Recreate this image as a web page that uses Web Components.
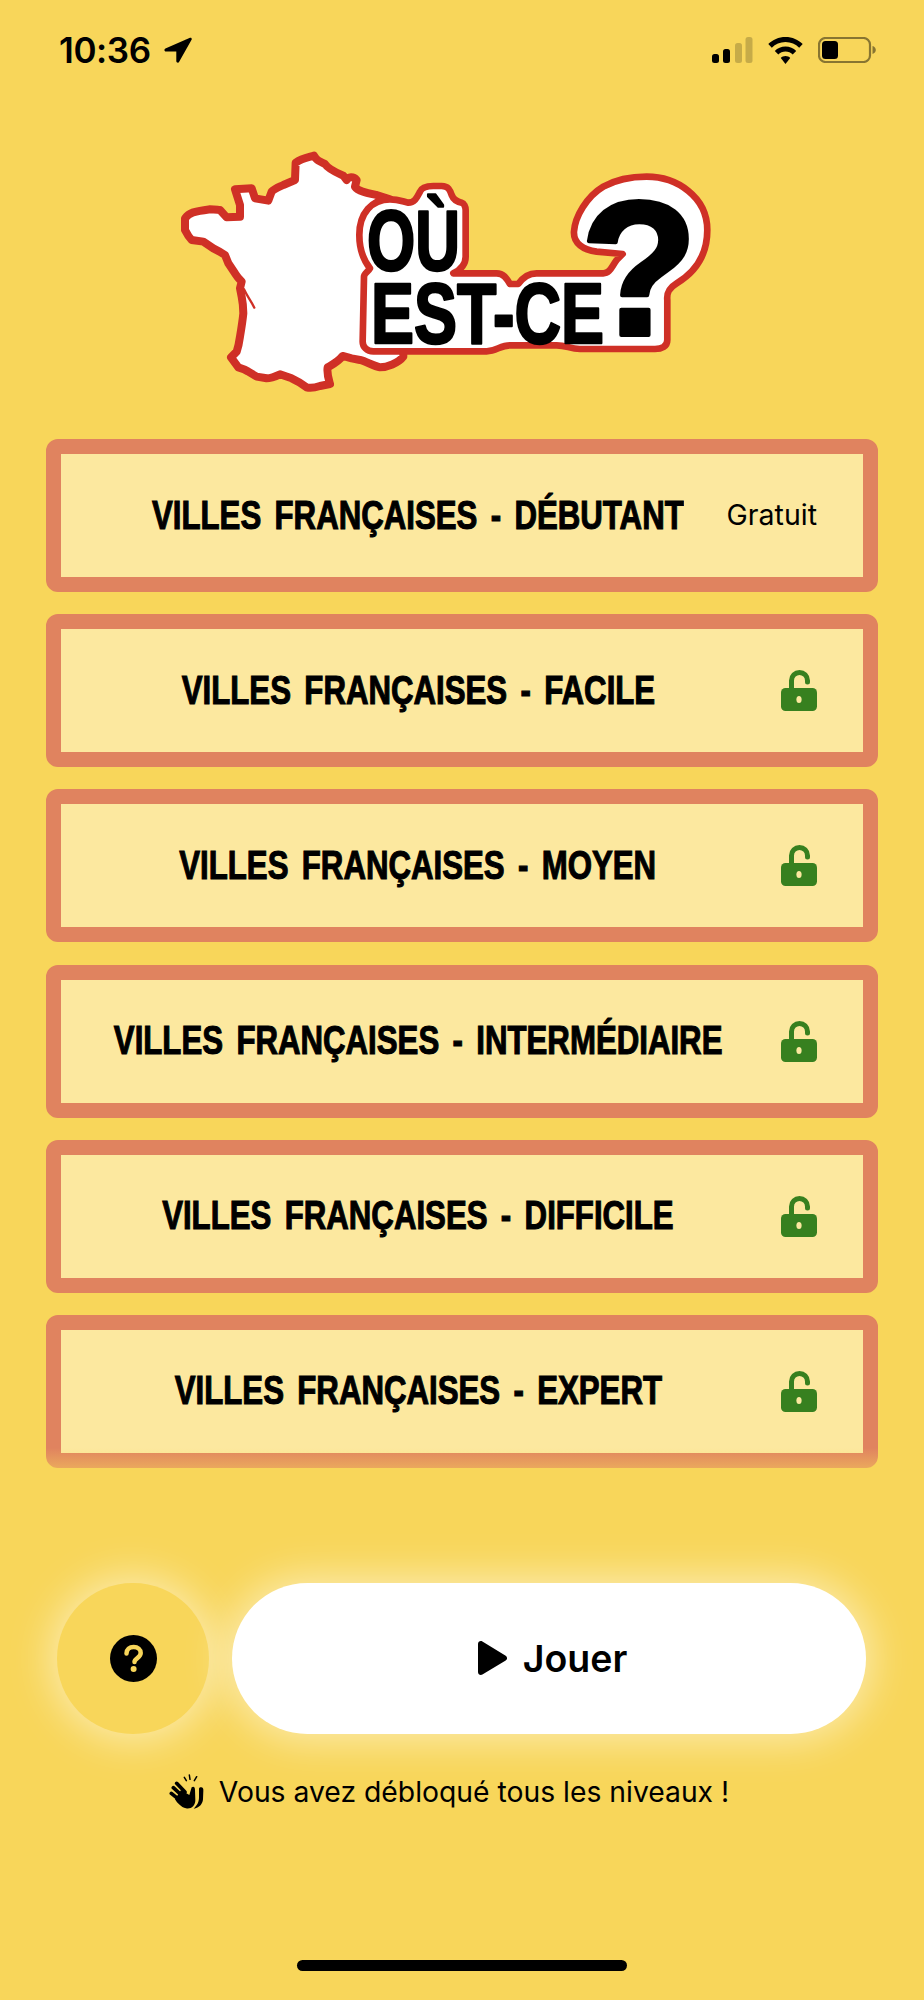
<!DOCTYPE html>
<html lang="fr"><head><meta charset="utf-8"><title>Où est-ce ?</title>
<style>html,body{margin:0;padding:0;background:#F8D65A}body{width:924px;height:2000px;overflow:hidden;font-family:Inter,"Liberation Sans",sans-serif;color:#000}</style>
</head><body>
<app-screen>
<status-bar></status-bar>
<game-logo></game-logo>
<level-list>
<level-card name="VILLES FRANÇAISES - DÉBUTANT"><span>Gratuit</span></level-card>
<level-card name="VILLES FRANÇAISES - FACILE"><lock-icon></lock-icon></level-card>
<level-card name="VILLES FRANÇAISES - MOYEN"><lock-icon></lock-icon></level-card>
<level-card name="VILLES FRANÇAISES - INTERMÉDIAIRE"><lock-icon></lock-icon></level-card>
<level-card name="VILLES FRANÇAISES - DIFFICILE"><lock-icon></lock-icon></level-card>
<level-card name="VILLES FRANÇAISES - EXPERT"><lock-icon></lock-icon></level-card>
</level-list>
<action-bar></action-bar>
<unlock-note>Vous avez débloqué tous les niveaux !</unlock-note>
<home-bar></home-bar>
</app-screen>
<script>
function def(name,html){customElements.define(name,class extends HTMLElement{constructor(){super();this.attachShadow({mode:'open'}).innerHTML=html}
connectedCallback(){const n=this.shadowRoot.querySelector('.n span');if(n)n.textContent=this.getAttribute('name')}})}
def('app-screen',`<style>:host{display:block;width:924px;height:2000px;box-sizing:border-box}</style><slot></slot>`);
def('status-bar',`<style>:host{display:flex;align-items:center;height:100px;padding:0 47px 0 59px;box-sizing:border-box}
.t{font:600 35px/1 Inter,sans-serif;letter-spacing:-.4px;width:94px;white-space:nowrap}
svg{display:block}.a{margin-left:11px}.sp{flex:1}.w{margin:0 15px 0 15px}</style>
<span class="t">10:36</span>
<svg class="a" width="28" height="26" viewBox="0 0 28 26"><path d="M26 .8 1.4 11.600c-1.600.7-1.200 3 .6 3H12.300l0 9.500c0 1.900 2.500 2.300 3 .5L27.700 2.600C28 1.200 27.200.3 26 .8Z"/></svg>
<span class="sp"></span>
<svg width="41" height="26" viewBox="0 0 41 26"><rect x="0" y="17" width="7" height="9" rx="2.500"/><rect x="11" y="12" width="7" height="14" rx="2.500"/><rect x="23" y="6" width="7" height="20" rx="2.500" opacity=".2"/><rect x="33.500" y="0" width="7" height="26" rx="2.500" opacity=".2"/></svg>
<svg class="w" width="35" height="27" viewBox="0 0 35 27"><path d="M17.500 0C10.700 0 4.600 2.700.3 7.100l3.500 3.600C7.300 7.100 12.100 5 17.500 5s10.200 2.100 13.700 5.700l3.500-3.600C30.400 2.700 24.300 0 17.500 0Z"/><path d="M17.500 9.500c-4.200 0-8 1.700-10.700 4.400l3.500 3.600c1.800-1.900 4.400-3 7.200-3s5.400 1.100 7.200 3l3.500-3.600c-2.700-2.700-6.500-4.400-10.700-4.400Z"/><path d="M17.500 19c-1.900 0-3.500.7-4.700 1.900l4.700 6.100 4.700-6.100C21 19.700 19.400 19 17.500 19Z"/></svg>
<svg width="59" height="26" viewBox="0 0 59 26"><rect x="1" y="1" width="51" height="24" rx="6.500" fill="none" stroke="#000" stroke-opacity=".45" stroke-width="2.200"/><rect x="4" y="4" width="16" height="18" rx="3.500"/><path d="M54.500 9c2 .6 3.300 2.200 3.300 4s-1.300 3.400-3.300 4Z" opacity=".45"/></svg>`);
def('game-logo',`<style>:host{display:block;height:339px}svg{display:block}
text{font-family:"Liberation Sans","Arial",sans-serif;font-weight:700;fill:#000;stroke:#000;stroke-linejoin:round}</style>
<svg width="924" height="339" viewBox="0 100 924 339">
<g transform="translate(160 130) scale(.3333)">
<path fill="#fff" stroke="#CF3026" stroke-width="24" stroke-linejoin="round" d="M407 98 C425 85 445 82 462 77 C468 88 472 92 495 102 C505 118 530 128 550 137 L560 150 C565 140 580 138 590 150 L585 170 C595 185 625 190 650 195 L690 208 L730 300 L730 680 C715 700 680 712 660 712 C640 708 620 695 600 690 L575 685 L548 678 C535 695 515 705 503 712 C500 730 505 745 510 762 L480 768 C465 773 450 775 440 772 C425 760 410 752 395 745 L360 733 C345 740 330 745 320 745 L290 740 L265 725 C255 718 245 715 235 712 L213 682 L230 665 C235 650 238 635 240 620 C245 590 248 570 250 550 C250 530 248 515 245 500 L240 475 L245 455 C235 445 230 438 225 430 L205 400 L195 375 C180 365 170 360 160 355 L130 335 L95 330 C85 320 80 310 75 300 L75 265 C85 252 92 250 100 247 C118 242 135 240 150 238 C165 238 175 240 180 240 L200 262 L240 260 L240 225 L225 178 L275 175 L285 205 L325 212 L335 185 C345 175 360 170 370 165 L405 150Z"/>
<path fill="none" stroke="#CF3026" stroke-width="7" stroke-linecap="round" d="M252 478 C262 500 272 510 283 533"/>
</g>
<g transform="translate(340 160) scale(.3333)">
<path fill="#fff" stroke="#CF3026" stroke-width="20" stroke-linejoin="round" d="M58 225 C58 160 95 118 150 118 C175 118 190 125 205 128 C225 128 232 110 240 95 C245 82 258 78 280 78 L305 78 C325 78 330 90 335 105 C340 118 350 125 365 128 C372 130 377 140 377 150 L377 290 C377 315 360 330 340 340 L470 340 C490 340 500 355 510 372 L535 372 C550 350 565 340 590 340 L790 340 C810 340 815 320 830 300 L848 282 L770 275 C730 270 700 250 702 215 C705 170 740 110 790 80 C830 58 880 50 920 50 C1010 50 1102 110 1102 210 C1102 290 1060 340 1010 370 C985 385 980 400 982 420 L982 540 C982 560 965 567 945 567 L720 567 C690 567 680 556 650 556 L510 556 C480 556 470 574 440 574 L100 574 C80 574 68 560 68 545 L72 350 C72 340 85 335 90 325 C70 300 58 270 58 225Z"/>
</g>
<text x="367" y="270" font-size="85" stroke-width="2.500" textLength="93" lengthAdjust="spacingAndGlyphs">OÙ</text>
<text x="371" y="343" font-size="85" stroke-width="2.500" textLength="233" lengthAdjust="spacingAndGlyphs">EST-CE</text>
<text x="580" y="335" font-size="192" stroke-width="4" textLength="118" lengthAdjust="spacingAndGlyphs">?</text>
</svg>`);
def('level-list',`<style>:host{display:flex;flex-direction:column;gap:22.200px;margin:0 46px;position:relative}
.fade{position:absolute;left:0;right:0;bottom:0;height:20px;background:linear-gradient(rgba(248,214,90,0),rgba(248,214,90,.45));pointer-events:none}</style><slot></slot><div class="fade"></div>`);
def('level-card',`<style>:host{display:grid;grid-template-columns:1fr 88px;align-items:center;height:153px;box-sizing:border-box;border:15.500px solid #E0835F;border-radius:12px;background:#FCE89F;background-clip:padding-box}
.n{display:flex;justify-content:center;min-width:0;position:relative;top:-1px}
.n span{flex:none;display:block;font:700 40px/1 "Liberation Sans",sans-serif;white-space:nowrap;word-spacing:6px;-webkit-text-stroke:1.100px #000;transform:scaleX(.78)}
.r{display:flex;justify-content:flex-end;padding-right:46px;font:400 28.500px/1 Inter,sans-serif;white-space:nowrap}</style>
<div class="n"><span></span></div><div class="r"><slot></slot></div>`);
def('lock-icon',`<style>:host{display:block;width:36px;height:41px}svg{display:block}</style>
<svg width="36" height="41" viewBox="0 0 36 41"><path d="M10.500 20V10.500a8 8 0 0 1 16 0v1.500" fill="none" stroke="#37801F" stroke-width="5" stroke-linecap="round"/><rect y="18" width="36" height="23" rx="4.500" fill="#37801F"/><ellipse cx="18" cy="29.500" rx="2.600" ry="3.500" fill="#FCE89F"/></svg>`);
def('action-bar',`<style>:host{display:flex;gap:23px;margin:115px 58px 0 57px;height:151px}
.h,.p{box-shadow:0 0 40px 6px rgba(255,255,255,.52);border-radius:76px;display:flex;align-items:center;justify-content:center}
.h{width:152px;background:#F8D65A}.p{flex:1;background:#fff;gap:16px;font:600 37.500px/1 Inter,sans-serif;padding-left:7px}svg{display:block}</style>
<div class="h"><svg width="47" height="47" viewBox="0 0 47 47"><circle cx="23.500" cy="23.500" r="23.500"/><path d="M16.500 18.500c0-4 3-6.500 7.200-6.500 4.100 0 7 2.400 7 6 0 5-6.200 5-6.200 9" fill="none" stroke="#F8D65A" stroke-width="4.500" stroke-linecap="round"/><circle cx="23.600" cy="34" r="3" fill="#F8D65A"/></svg></div>
<div class="p"><svg width="29" height="34" viewBox="0 0 29 34"><path d="M0 3c0-2.400 2.400-3.700 4.400-2.500L27.300 14.400c2.300 1.200 2.300 4.200 0 5.400L4.400 33.500C2.400 34.700 0 33.400 0 31Z"/></svg><span>Jouer</span></div>`);
def('unlock-note',`<style>:host{display:flex;align-items:center;justify-content:center;gap:14px;margin-top:40px;height:36px;font:400 28.300px/1 Inter,sans-serif;white-space:nowrap;padding-right:26px}svg{display:block}</style>
<svg width="36" height="36" viewBox="24 22 108 108"><g stroke="#000" stroke-linecap="round" fill="none"><path stroke-width="4.500" d="M70 32 76 42M85 25 87 38M107 30 100 42"/><path stroke-width="11" d="M47 50 72 76M37 63 64 88M31 80 58 102"/></g><path d="M60 70 85 85 92 62C98 58 102 62 102 70L103 100C103 118 90 128 75 125 60 122 48 108 42 98Z"/><path d="M118 62C124 60 128 64 127 72L126 98C125 112 115 124 98 126 110 115 114 105 114 92L114 68C114 64 115 63 118 62Z"/></svg><slot></slot>`);
def('home-bar',`<style>:host{display:block;width:330px;height:11px;background:#000;border-radius:6px;margin:150px auto 0}</style>`);
</script>
</body></html>
